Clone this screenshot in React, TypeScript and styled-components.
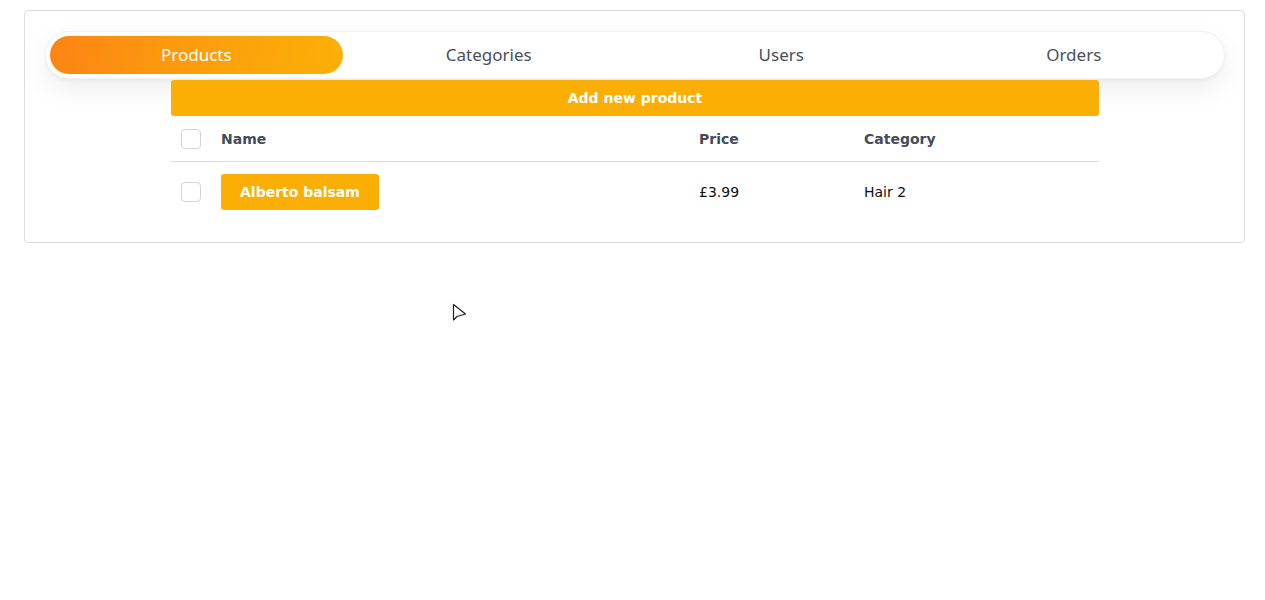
import React, { useState } from 'react';
import styled, { createGlobalStyle } from 'styled-components';

const GlobalStyle = createGlobalStyle`
  body {
    margin: 0;
    background: #ffffff;
    font-family: "DejaVu Sans", Verdana, sans-serif;
  }
`;

const Page = styled.div`
  position: relative;
  padding: 10px 20px 0 24px;
  height: 600px;
  box-sizing: border-box;
`;

const Card = styled.section`
  border: 1px solid #dcdcdc;
  border-radius: 4px;
  padding: 20px 19px 20px 20px;
  background: #fff;
`;

const TabBar = styled.nav`
  display: grid;
  grid-template-columns: repeat(4, 1fr);
  padding: 4px;
  border-radius: 24px;
  background: #fff;
  border: 1px solid #f2f2f2;
  box-shadow: 0 10px 28px rgba(0, 0, 0, 0.07), 0 2px 4px rgba(0, 0, 0, 0.04);
`;

const Tab = styled.button<{ $active?: boolean }>`
  height: 38px;
  padding: 0 0 2px;
  border: none;
  border-radius: 19px;
  font-family: "Noto Sans", "Open Sans", sans-serif;
  font-size: 17px;
  cursor: pointer;
  color: ${(p) => (p.$active ? '#ffffff' : '#4a4f5b')};
  background: ${(p) =>
    p.$active ? 'linear-gradient(100deg, #fd8414 0%, #fba00c 55%, #fbb007 100%)' : 'transparent'};
`;

const Content = styled.div`
  width: 928px;
  margin: 1px auto 0;
`;

const AddButton = styled.button`
  width: 100%;
  height: 36px;
  border: none;
  border-radius: 3px;
  background: #fbaf05;
  color: #fff;
  font-family: "DejaVu Sans", Verdana, sans-serif;
  font-weight: bold;
  font-size: 14px;
  cursor: pointer;
`;

const Row = styled.div<{ $head?: boolean }>`
  display: grid;
  grid-template-columns: 40px 478px 165px 1fr;
  align-items: center;
  height: ${(p) => (p.$head ? '45px' : '60px')};
  border-bottom: ${(p) => (p.$head ? '1px solid #dedede' : 'none')};
`;

const Cell = styled.div<{ $head?: boolean }>`
  padding: 0 10px;
  font-size: 14px;
  font-weight: ${(p) => (p.$head ? 'bold' : 'normal')};
  color: ${(p) => (p.$head ? '#454b57' : '#111')};
`;

const Check = styled.span`
  display: block;
  width: 18px;
  height: 18px;
  border: 1px solid #d0d5dc;
  border-radius: 4px;
  background: #fff;
`;

const NameButton = styled.button`
  height: 36px;
  padding: 0 19px;
  border: none;
  border-radius: 3px;
  background: #fbaf05;
  color: #fff;
  font-family: "DejaVu Sans", Verdana, sans-serif;
  font-weight: bold;
  font-size: 14px;
`;

const Cursor = styled.svg`
  position: absolute;
  left: 452px;
  top: 303px;
`;

const tabs = ['Products', 'Categories', 'Users', 'Orders'];

export default function App() {
  const [active, setActive] = useState(0);
  return (
    <Page>
      <GlobalStyle />
      <Card>
        <TabBar>
          {tabs.map((t, i) => (
            <Tab key={t} $active={i === active} onClick={() => setActive(i)}>
              {t}
            </Tab>
          ))}
        </TabBar>
        <Content>
          <AddButton>Add new product</AddButton>
          <Row $head>
            <Cell><Check /></Cell>
            <Cell $head>Name</Cell>
            <Cell $head>Price</Cell>
            <Cell $head>Category</Cell>
          </Row>
          <Row>
            <Cell><Check /></Cell>
            <Cell><NameButton>Alberto balsam</NameButton></Cell>
            <Cell>£3.99</Cell>
            <Cell>Hair 2</Cell>
          </Row>
        </Content>
      </Card>
      <Cursor width="16" height="20" viewBox="0 0 16 20">
        <path d="M1.5 1.5 L1.5 17 L5 13.5 L13.5 11 Z" fill="#fff" stroke="#222" strokeWidth="1.2" strokeLinejoin="round" />
      </Cursor>
    </Page>
  );
}
